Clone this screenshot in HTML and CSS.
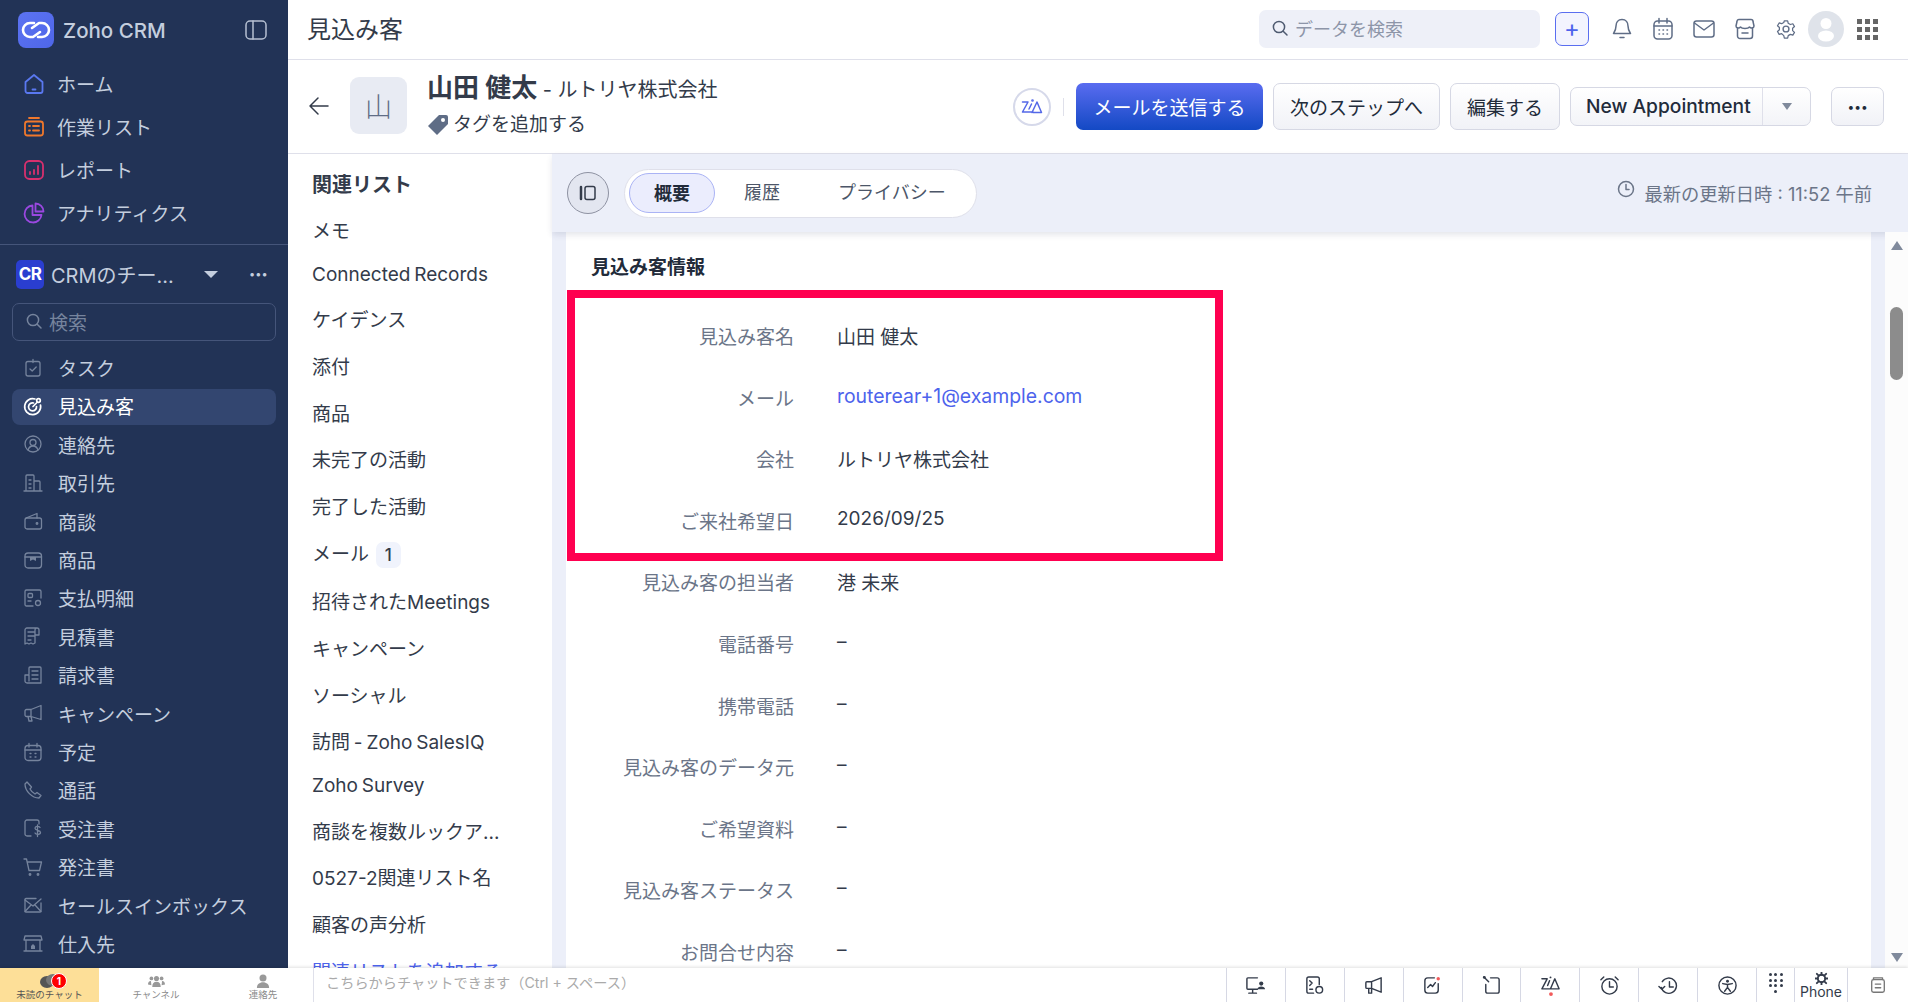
FILE: index.html
```html
<!DOCTYPE html>
<html lang="ja">
<head>
  <meta charset="UTF-8" />
  <title>Zoho CRM</title>
  <link rel="stylesheet" href="styles.css">
</head>
<body>
  <svg class="defs" width="0" height="0">
    <symbol id="i-search" viewBox="0 0 18 18"><circle cx="8" cy="8" r="5.6"/><path d="M12.2 12.2 16 16"/></symbol>
  </svg>
  <div class="app">
    <aside class="sidebar">
      <div class="brand">
        <div class="brand-logo">
          <svg viewBox="0 0 36 36" width="36" height="36"><g fill="none" stroke="#fff" stroke-width="2.6"><path d="M16 11h-4a7 7 0 0 0 0 14h3l7-5"/><path d="M20 25h4a7 7 0 0 0 0-14h-3l-7 5"/></g></svg>
        </div>
        <div class="brand-name">Zoho CRM</div>
        <svg class="brand-toggle" viewBox="0 0 22 20" width="22" height="20"><rect x="1" y="1" width="20" height="18" rx="4"/><path d="M8 1v18"/></svg>
      </div>
      <nav class="top-nav">
        <a class="top-item"><svg viewBox="0 0 22 22" class="c-blue"><path d="M2.5 9 11 2l8.500 7v9a2 2 0 0 1-2 2h-13a2 2 0 0 1-2-2z"/><path d="M9.500 16.500h3"/></svg>ホーム</a>
        <a class="top-item"><svg viewBox="0 0 22 22" class="c-orange"><path d="M6 2h10"/><rect x="2" y="5.500" width="18" height="14" rx="2.500"/><path d="M6 10h1M6 14.500h1M10 10h6M10 14.500h6"/></svg>作業リスト</a>
        <a class="top-item"><svg viewBox="0 0 22 22" class="c-pink"><rect x="2" y="2" width="18" height="18" rx="4.500"/><path d="M7 15v-2M11 15v-4M15 15V7"/></svg>レポート</a>
        <a class="top-item"><svg viewBox="0 0 22 22" class="c-purple"><path d="M9.500 3.500a8.500 8.500 0 1 0 9 9.500h-9z"/><path d="M12.500 1.500a8 8 0 0 1 8 8h-8z"/></svg>アナリティクス</a>
      </nav>
      <div class="team">
        <div class="team-row">
          <span class="team-badge">CR</span>
          <span class="team-name">CRMのチー...</span>
          <span class="caret"></span>
          <span class="team-more">•••</span>
        </div>
        <div class="side-search"><svg width="18" height="18"><use href="#i-search"/></svg>検索</div>
      </div>
      <nav class="mod-nav">
        <a class="mod-item"><svg viewBox="0 0 20 20"><rect x="3" y="3.500" width="14" height="14.500" rx="2"/><path d="M10 1.500v3M7 11l2.200 2 4-4"/></svg>タスク</a>
        <a class="mod-item active"><svg viewBox="0 0 20 20"><path d="M12 3a8 8 0 1 0 5.500 6"/><path d="M10.500 7a4 4 0 1 0 3 3.500"/><path d="M10 10.500l4-4"/><circle cx="15.500" cy="4.500" r="1.800"/></svg>見込み客</a>
        <a class="mod-item"><svg viewBox="0 0 20 20"><circle cx="10" cy="10" r="8"/><circle cx="10" cy="8.500" r="3"/><path d="M5 16c1-3 3-4 5-4s4 1 5 4"/></svg>連絡先</a>
        <a class="mod-item"><svg viewBox="0 0 20 20"><path d="M1 18h18M3 18V3a1 1 0 0 1 1-1h6a1 1 0 0 1 1 1v15M11 8h5a1 1 0 0 1 1 1v9M6 7h2M6 11h2M6 15h2"/></svg>取引先</a>
        <a class="mod-item"><svg viewBox="0 0 20 20"><rect x="2" y="7" width="16.500" height="11" rx="2"/><path d="M3 7l11-4.500V7"/><circle cx="14" cy="12.500" r=".8"/></svg>商談</a>
        <a class="mod-item"><svg viewBox="0 0 20 20"><rect x="2" y="3" width="16.500" height="15" rx="3"/><path d="M2 7h16.500"/><path class="fill" d="M7 7h6v4l-3-1.500L7 11z"/></svg>商品</a>
        <a class="mod-item"><svg viewBox="0 0 20 20"><path d="M10 18H3.500a1.500 1.500 0 0 1-1.500-1.500v-13A1.500 1.500 0 0 1 3.500 2h13A1.500 1.500 0 0 1 18 3.500V10"/><rect x="5" y="5.500" width="4.500" height="4" rx="1"/><path d="M5 13h3"/><circle cx="15" cy="15" r="2.500"/></svg>支払明細</a>
        <a class="mod-item"><svg viewBox="0 0 20 20"><path d="M14 2H4a2 2 0 0 0-2 2v14l2-1 2 1 2-1 2 1 2-1V4a2 2 0 0 1 2-2 2 2 0 0 1 2 2v5h-4M5 6h6M5 10h6M5 14h3"/></svg>見積書</a>
        <a class="mod-item"><svg viewBox="0 0 20 20"><path d="M6 9V3a1 1 0 0 1 1-1h10a1 1 0 0 1 1 1v15H4a2 2 0 0 1-2-2v-6h4v6M9 6h6M9 10h6M9 14h6"/></svg>請求書</a>
        <a class="mod-item"><svg viewBox="0 0 20 20"><path d="M18 2.500v14L8 13.500H3.500a1.500 1.500 0 0 1-1.500-1.500V8a1.500 1.500 0 0 1 1.500-1.500H8zM8 6.500v7M5 13.500 6 18h3l-1-4.500"/></svg>キャンペーン</a>
        <a class="mod-item"><svg viewBox="0 0 20 20"><rect x="2" y="3.500" width="16" height="15" rx="3"/><path d="M6 1.500v3.500M14 1.500v3.500M2 8h16M7 11.500h1M12 11.500h1M7 15h1M12 15h1"/></svg>予定</a>
        <a class="mod-item"><svg viewBox="0 0 20 20"><path d="M4 2 2 4c0 7 7 14 14 14l2-2.500-4-3-2 1.500c-2-1-4-3-5-5l1.500-2z"/></svg>通話</a>
        <a class="mod-item"><svg viewBox="0 0 20 20"><path d="M8 18H4a2 2 0 0 1-2-2V4a2 2 0 0 1 2-2h10a2 2 0 0 1 2 2v2"/><path d="M17 9.500c-1-1.500-5-1.500-5 .8 0 2.700 5.500 1.500 5.500 4.200 0 2.300-4.500 2.300-5.500.5M14.500 7v11.500"/></svg>受注書</a>
        <a class="mod-item"><svg viewBox="0 0 20 20"><path d="M1 2h2.500L6 13.500h10.500L18.500 5H4"/><circle cx="7" cy="17.500" r=".8"/><circle cx="15" cy="17.500" r=".8"/></svg>発注書</a>
        <a class="mod-item"><svg viewBox="0 0 20 20"><path d="M13 3.500H3a1 1 0 0 0-1 1V16a1 1 0 0 0 1 1h14a1 1 0 0 0 1-1V8"/><path d="m2 5 8 6 8-7M2 16.500 8 10M18 16.500 12 10"/></svg>セールスインボックス</a>
        <a class="mod-item"><svg viewBox="0 0 20 20"><path d="M2 3h16l1 4H1zM3 7v11h14V7M1 18h18"/><path class="fill" d="M8 16v-3l2-2 2 2v3z"/></svg>仕入先</a>
      </nav>
    </aside>

    <main class="main">
      <header class="topbar">
        <div class="page-title">見込み客</div>
        <div class="global-search"><svg width="18" height="18"><use href="#i-search"/></svg>データを検索</div>
        <button class="plus-btn">+</button>
        <svg class="top-ic" viewBox="0 0 22 24"><path d="M11 2.500c-4 0-6 3-6 6.500 0 4-1.500 6-2.500 7.500h17C18.500 15 17 13 17 9c0-3.500-2-6.500-6-6.500zM9 20.500h4"/></svg>
        <svg class="top-ic" viewBox="0 0 22 24"><rect x="2" y="4" width="18" height="18" rx="3.500"/><path d="M7 1.500V6M15 1.500V6M2 9h18M7 13h.5M11 13h.5M15 13h.5M7 17h.5M11 17h.5M15 17h.5"/></svg>
        <svg class="top-ic" viewBox="0 0 22 24"><rect x="1" y="4" width="20" height="16" rx="2.500"/><path d="m1.500 6 9.500 7 9.500-7"/></svg>
        <svg class="top-ic" viewBox="0 0 22 24"><path d="M5 2.500h12a2 2 0 0 1 2 2l1 4.500c0 2-3 3-4.500 1-1.500 2-7.500 2-9 0-1.500 2-4.500 1-4.500-1l1-4.500a2 2 0 0 1 2-2z"/><path d="M3.500 11v8a2.500 2.500 0 0 0 2.500 2.500h10a2.500 2.500 0 0 0 2.500-2.500v-8M8 16h6"/></svg>
        <svg class="top-ic" viewBox="0 0 24 24"><path d="M10 2.500h4l.7 3 2.600 1.500 3-.9 2 3.400-2.300 2.100v2.800l2.300 2.100-2 3.400-3-.9-2.600 1.500-.7 3h-4l-.7-3L6.700 18l-3 .9-2-3.400L4 13.400v-2.800L1.700 8.500l2-3.400 3 .9L9.300 4.500z" transform="translate(1.200 .8) scale(.9)"/><circle cx="12" cy="12" r="3.200"/></svg>
        <div class="avatar"><svg viewBox="0 0 36 36" width="36" height="36"><circle cx="18" cy="18" r="18" fill="#dfe3ea"/><circle cx="18" cy="12.500" r="5.500" fill="#fff"/><ellipse cx="18" cy="25" rx="8" ry="5.500" fill="#fff"/></svg></div>
        <div class="apps-grid"><i></i><i></i><i></i><i></i><i></i><i></i><i></i><i></i><i></i></div>
      </header>

      <section class="record-head">
        <svg class="back" viewBox="0 0 22 20" width="22" height="20"><path d="M20 10H2M10 2l-8 8 8 8"/></svg>
        <div class="record-avatar">山</div>
        <div class="record-info">
          <div class="record-name"><strong>山田 健太</strong> - ルトリヤ株式会社</div>
          <div class="record-tag">
            <svg class="tag-ic" viewBox="0 0 22 22" width="22" height="22"><path d="M12 1h7a2 2 0 0 1 2 2v7L10 21 1 12z" fill="#5f6d86"/><circle cx="16" cy="6" r="2" fill="#fff"/></svg>
            タグを追加する
          </div>
        </div>
        <div class="record-actions">
          <div class="zia-circle"><svg viewBox="0 0 24 20" width="24" height="20"><path d="M2.500 5H8L2.500 15H13M13 15.500h8.500L17 5l-5 10.500M11.500 7 9 12"/><circle cx="12.500" cy="3.500" r=".6"/></svg></div>
          <span class="action-sep"></span>
          <button class="btn btn-primary">メールを送信する</button>
          <button class="btn">次のステップへ</button>
          <button class="btn">編集する</button>
          <div class="split-btn"><span class="split-label">New Appointment</span><span class="split-caret"></span></div>
          <button class="btn btn-more">•••</button>
        </div>
      </section>

      <div class="record-body">
        <aside class="related">
          <h3 class="related-title">関連リスト</h3>
          <ul class="related-list">
            <li>メモ</li>
            <li>Connected Records</li>
            <li>ケイデンス</li>
            <li>添付</li>
            <li>商品</li>
            <li>未完了の活動</li>
            <li>完了した活動</li>
            <li>メール <span class="count">1</span></li>
            <li>招待されたMeetings</li>
            <li>キャンペーン</li>
            <li>ソーシャル</li>
            <li>訪問 - Zoho SalesIQ</li>
            <li>Zoho Survey</li>
            <li>商談を複数ルックア...</li>
            <li>0527-2関連リスト名</li>
            <li>顧客の声分析</li>
            <li class="add-link">関連リストを追加する</li>
          </ul>
        </aside>

        <div class="detail">
          <div class="tab-bar">
            <button class="panel-toggle"><svg viewBox="0 0 18 16" width="18" height="16"><path d="M2 2v12" stroke-width="2.500"/><rect x="6" y="1.500" width="10" height="13" rx="2"/></svg></button>
            <div class="tabs">
              <span class="tab active">概要</span>
              <span class="tab">履歴</span>
              <span class="tab">プライバシー</span>
            </div>
            <div class="updated"><svg viewBox="0 0 18 18" width="18" height="18"><circle cx="9" cy="9" r="7.500"/><path d="M9 4.500V9.500H12"/></svg>最新の更新日時 : 11:52 午前</div>
          </div>
          <div class="detail-scroll">
            <div class="detail-content">
              <h3 class="section-title">見込み客情報</h3>
              <div class="fields">
                <div class="highlight"></div>
                <div class="field"><span class="f-label">見込み客名</span><span class="f-value">山田 健太</span></div>
                <div class="field"><span class="f-label">メール</span><span class="f-value f-link">routerear+1@example.com</span></div>
                <div class="field"><span class="f-label">会社</span><span class="f-value">ルトリヤ株式会社</span></div>
                <div class="field"><span class="f-label">ご来社希望日</span><span class="f-value">2026/09/25</span></div>
                <div class="field"><span class="f-label">見込み客の担当者</span><span class="f-value">港 未来</span></div>
                <div class="field"><span class="f-label">電話番号</span><span class="f-value">–</span></div>
                <div class="field"><span class="f-label">携帯電話</span><span class="f-value">–</span></div>
                <div class="field"><span class="f-label">見込み客のデータ元</span><span class="f-value">–</span></div>
                <div class="field"><span class="f-label">ご希望資料</span><span class="f-value">–</span></div>
                <div class="field"><span class="f-label">見込み客ステータス</span><span class="f-value">–</span></div>
                <div class="field"><span class="f-label">お問合せ内容</span><span class="f-value">–</span></div>
              </div>
            </div>
            <div class="scrollbar">
              <span class="sb-up"></span>
              <span class="sb-thumb"></span>
              <span class="sb-down"></span>
            </div>
          </div>
        </div>
      </div>
    </main>
  </div>

  <footer class="chatbar">
    <div class="chat-tab unread">
      <svg viewBox="0 0 20 16" width="20" height="16"><ellipse cx="7" cy="9" rx="7" ry="6" fill="#555"/><ellipse cx="13" cy="7" rx="7" ry="6" fill="#777"/></svg>
      <span class="chat-badge">1</span>
      <span class="chat-label">未読のチャット</span>
    </div>
    <div class="chat-tab channel">
      <svg class="people" viewBox="0 0 20 16" width="17" height="14"><circle cx="10" cy="5" r="3"/><circle cx="4" cy="5" r="2.200"/><circle cx="16" cy="5" r="2.200"/><path d="M5 15c0-4 2-6 5-6s5 2 5 6zM0 12c0-2 1-4 3.500-4L4 13zM20 12c0-2-1-4-3.500-4L16 13z"/></svg>
      <span class="chat-label">チャンネル</span>
    </div>
    <div class="chat-tab contact">
      <svg class="people" viewBox="0 0 16 16" width="14" height="14"><circle cx="8" cy="4.500" r="4"/><path d="M1 16c0-4 3-6.500 7-6.500s7 2.500 7 6.500z"/></svg>
      <span class="chat-label">連絡先</span>
    </div>
    <div class="chat-input">こちらからチャットできます（Ctrl + スペース）</div>
    <div class="tool-cell"><svg viewBox="0 0 22 22"><path d="M13 3H3a1 1 0 0 0-1 1v10a1 1 0 0 0 1 1h10M8 15v4M4 19h8"/><circle class="solid" cx="17" cy="9" r="2.200"/><path class="solid" d="M13 15c0-2 2-3 4-3s4 1 4 3z"/></svg></div>
    <div class="tool-cell"><svg viewBox="0 0 22 22"><path d="M10 19H5a2 2 0 0 1-2-2V4a2 2 0 0 1 2-2h9a2 2 0 0 1 2 2v6M6 6l2.500 2.500L6 11M6 15h3"/><circle cx="16" cy="15.500" r="3.500"/></svg></div>
    <div class="tool-cell"><svg viewBox="0 0 22 22"><path d="M19 3v15L9 14H4a1 1 0 0 1-1-1V8a1 1 0 0 1 1-1h5zM9 7v7M6 14v5h3v-5"/></svg></div>
    <div class="tool-cell"><svg viewBox="0 0 22 22"><path d="M13 3H6a3 3 0 0 0-3 3v10a3 3 0 0 0 3 3h8a3 3 0 0 0 3-3V9M6 13l3-3 2 2 3-4"/><circle class="red" cx="17" cy="4" r="1.800"/></svg></div>
    <div class="tool-cell"><svg viewBox="0 0 22 22"><path d="M10 3h7a2 2 0 0 1 2 2v12a2 2 0 0 1-2 2H7a2 2 0 0 1-2-2v-7M3 2l5 5"/><circle class="solid" cx="3.500" cy="2.500" r="1.500"/></svg></div>
    <div class="tool-cell"><svg viewBox="0 0 22 22"><path d="M2 4h5.500L2 14.500h9.500M11 14.500h9L15.500 4l-4.500 10.500M10 6 8 11"/><circle class="solid" cx="11" cy="2.500" r="1"/><circle class="red" cx="11.500" cy="20" r="2"/></svg></div>
    <div class="tool-cell"><svg viewBox="0 0 22 22"><circle cx="11" cy="12" r="8"/><path d="M11 7v5.500h4M2 5l3-3M20 5l-3-3"/></svg></div>
    <div class="tool-cell"><svg viewBox="0 0 22 22"><path d="M4.500 7a8 8 0 1 1-1 6M1 12l3 3 3-3M12 7v5.500h4"/></svg></div>
    <div class="tool-cell"><svg viewBox="0 0 22 22"><circle cx="11" cy="11" r="9"/><circle class="solid" cx="11" cy="6.500" r="1.500"/><path d="M6 9l5 1 5-1M11 10v3M8 17l3-4 3 4"/></svg></div>
    <div class="tool-cell narrow"><div class="dial"><i></i><i></i><i></i><i></i><i></i><i></i><i></i><i></i><i></i><i class="last"></i></div></div>
    <div class="tool-cell phone">
      <svg viewBox="0 0 14 14" width="14" height="14"><circle cx="7" cy="7" r="4"/><path d="M7 0v3M7 11v3M0 7h3M11 7h3M2 2l2 2M10 10l2 2M12 2l-2 2M4 10l-2 2"/></svg>
      <span>Phone</span>
    </div>
    <div class="tool-end"><svg viewBox="0 0 20 20" width="18" height="18"><rect x="3" y="4" width="14" height="14" rx="2"/><path d="M5 4V2h10v2M7 9h6M7 13h6"/></svg></div>
  </footer>
</body>
</html>
```
FILE: styles.css
```css
* { margin: 0; padding: 0; box-sizing: border-box; }
html, body { height: 100%; overflow: hidden; }
body { font-family: Inter, "Noto Sans CJK JP", sans-serif; color: #222b3a; background: #fff; font-size: 19px; }
.defs { position: absolute; }
svg { fill: none; stroke: currentColor; stroke-width: 1.5; stroke-linecap: round; stroke-linejoin: round; flex: none; }
ul { list-style: none; }
button { font-family: inherit; }
.app { display: flex; height: 968px; }

/* sidebar */
.sidebar { width: 288px; flex: none; background: #223356; color: #c4cede; overflow: hidden; }
.brand { display: flex; align-items: center; height: 60px; padding: 0 21px 0 18px; }
.brand-logo { width: 36px; height: 36px; border-radius: 8px; background: linear-gradient(135deg, #5c73f2, #4e66e8); }
.brand-name { font-size: 20.500px; font-weight: 500; margin-left: 9px; flex: 1; color: #c4cede; padding-top: 1px; }
.brand-toggle { color: #b6c0d2; }
.top-nav { padding: 2px 0 10px; border-bottom: 1px solid #45557a; height: 185px; }
.top-item { display: flex; align-items: center; height: 43px; padding-left: 23px; gap: 12px; font-size: 19px; }
.top-item svg { width: 22px; height: 22px; stroke-width: 1.8; }
.c-blue { color: #5a78f0; }
.c-orange { color: #f0782c; }
.c-pink { color: #d8306e; }
.c-purple { color: #9a48e0; }
.team { padding: 0 12px; }
.team-row { display: flex; align-items: center; height: 58px; padding: 0 4px; }
.team-badge { width: 28px; height: 29px; border-radius: 5px; background: #2a3ed0; color: #fff; font-weight: 700; font-size: 17px; letter-spacing: -.5px; display: flex; align-items: center; justify-content: center; }
.team-name { font-size: 20px; margin-left: 7px; width: 153px; white-space: nowrap; }
.caret { width: 0; height: 0; border: 7px solid transparent; border-top: 7px solid #c4cede; border-bottom: 0; }
.team-more { margin-left: 31px; font-size: 11px; color: #c4cede; }
.side-search { display: flex; align-items: center; gap: 6px; height: 38px; border: 1px solid #45557a; border-radius: 7px; padding: 0 12px 2px; color: #76849d; font-size: 19px; }
.side-search svg { color: #76849d; }
.mod-nav { padding: 9.600px 12px 0; }
.mod-item { display: flex; align-items: center; height: 36px; margin-bottom: 2.400px; padding: 0 0 2px 11px; gap: 15px; font-size: 19px; border-radius: 8px; }
.mod-item svg { width: 20px; height: 20px; color: #76849d; stroke-width: 1.3; }
.mod-item svg .fill { fill: currentColor; stroke: none; }
.mod-item.active { background: #334670; color: #fff; }
.mod-item.active svg { color: #fff; stroke-width: 1.7; }

/* top bar */
.main { flex: 1; min-width: 0; display: flex; flex-direction: column; }
.topbar { display: flex; align-items: center; height: 60px; border-bottom: 1px solid #dfe0ea; padding: 0 30px 1px 19px; flex: none; color: #5f6d86; }
.page-title { font-size: 24px; color: #333b4a; margin-right: auto; padding-bottom: 3px; }
.global-search { display: flex; align-items: center; gap: 6px; width: 281px; height: 38px; background: #eef0f8; border-radius: 7px; padding: 0 12px 2px; color: #8d95a8; font-size: 18px; margin-right: 15px; }
.global-search svg { color: #4e5a70; }
.plus-btn { width: 34px; height: 34px; border: 1px solid #5a6ef0; border-radius: 7px; background: #f3f4fe; color: #4d63ec; font-size: 24px; line-height: 1; margin-right: 22px; }
.top-ic { width: 22px; height: 24px; margin-right: 19px; color: #5f6d86; }
.avatar { width: 36px; height: 36px; margin-left: -8px; margin-right: 13px; }
.avatar svg { stroke: none; }
.apps-grid { display: grid; grid-template-columns: repeat(3, 5px); gap: 3px; }
.apps-grid i { width: 5px; height: 5px; background: #666; }

/* record header */
.record-head { display: flex; align-items: center; height: 94px; border-bottom: 1px solid #dfe0ea; padding: 0 24px 2px 20px; flex: none; }
.back { color: #333b4a; }
.record-avatar { width: 57px; height: 57px; border-radius: 9px; background: #e8ebf3; color: #5f6d86; font-size: 27px; font-weight: 300; display: flex; align-items: center; justify-content: center; margin-left: 20px; }
.record-info { margin-left: 20px; }
.record-name { font-size: 20px; color: #333b4a; line-height: 32px; }
.record-name strong { font-size: 26px; font-weight: 700; }
.record-tag { display: flex; align-items: center; gap: 4px; font-size: 19px; color: #333b4a; line-height: 28px; margin-top: 5px; }
.tag-ic { stroke: none; }
.record-actions { display: flex; align-items: center; margin-left: auto; margin-top: 2px; }
.zia-circle { width: 38px; height: 38px; border-radius: 50%; border: 2px solid #d6d9ea; display: flex; align-items: center; justify-content: center; color: #5468e8; margin-right: 12px; }
.action-sep { width: 1px; height: 18px; background: #dfe0ea; margin-right: 12px; }
.btn { height: 47px; padding: 0 16px; border: 1px solid #d6d8e4; border-radius: 7px; background: linear-gradient(#fff, #f1f2f7); font-size: 19px; color: #222b3a; margin-right: 10px; }
.btn-primary { background: linear-gradient(#5a6cf0, #1349c4); border: 0; color: #fff; width: 187px; padding: 0; }
.split-btn { display: flex; align-items: center; height: 39px; width: 241px; border: 1px solid #d6d8e4; border-radius: 7px; background: linear-gradient(#fff, #f3f4f8); margin-right: 20px; }
.split-label { font-size: 19.200px; font-weight: 500; padding-left: 15px; width: 192px; line-height: 37px; border-right: 1px solid #dfe0ea; white-space: nowrap; }
.split-caret { width: 0; height: 0; margin: 0 auto; border: 5px solid transparent; border-top: 7px solid #808a9c; border-bottom: 0; }
.btn-more { height: 39px; width: 53px; padding: 0; font-size: 12px; margin-right: 0; }

/* related list */
.record-body { flex: 1; display: flex; min-height: 0; }
.related { width: 264px; flex: none; padding: 17px 0 0 24px; overflow: hidden; }
.related-title { font-size: 20px; font-weight: 700; color: #333b4a; line-height: 28px; margin-bottom: 7px; }
.related-list li { padding: 9.850px 0; font-size: 19px; word-spacing: -1.500px; color: #333b4a; white-space: nowrap; }
.count { display: inline-block; background: #f0f3fc; border-radius: 7px; padding: 0 9px; line-height: 26px; font-size: 17px; font-weight: 500; margin-left: 3px; }
.related-list .add-link { color: #4d63ec; }

/* detail */
.detail { flex: 1; min-width: 0; display: flex; flex-direction: column; background: #eceff9; }
.tab-bar { display: flex; align-items: center; height: 78px; padding: 0 36px 0 15px; flex: none; box-shadow: 0 3px 6px rgba(40, 50, 90, .12); position: relative; }
.panel-toggle { width: 42px; height: 42px; border-radius: 50%; border: 1px solid #8e92a2; background: #e3e6f0; display: flex; align-items: center; justify-content: center; color: #333b4a; margin-right: 15px; }
.tabs { display: flex; align-items: center; height: 49px; background: #fff; border: 1px solid #dfe0ea; border-radius: 25px; padding: 0 1px 0 4px; }
.tab { font-size: 18px; color: #4c5668; height: 40px; line-height: 40px; padding: 0 29px; border-radius: 20px; }
.tab.active { background: #ebedfd; border: 1px solid #aab3f5; font-weight: 700; color: #222b3a; padding: 0 24px; line-height: 39px; }
.updated { display: flex; align-items: center; gap: 9px; margin-left: auto; color: #6b7588; font-size: 18.300px; }
.updated svg { margin-top: -8px; }
.detail-scroll { flex: 1; display: flex; min-height: 0; padding-left: 14px; }
.detail-content { flex: 1; background: #fff; padding: 22px 0 0 25px; overflow: hidden; }
.section-title { font-size: 19px; font-weight: 700; color: #222b3a; line-height: 28px; }
.fields { position: relative; margin-top: 8px; padding-top: 32px; }
.highlight { position: absolute; left: -24px; top: 0; width: 656px; height: 271px; border: 8px solid #ff0050; }
.field { display: flex; height: 61.600px; align-items: flex-start; font-size: 19px; }
.f-label { width: 203px; text-align: right; color: #6b7588; white-space: nowrap; }
.f-value { margin-left: 43px; color: #333b4a; }
.f-link { color: #4d63ec; font-size: 19.400px; }
.scrollbar { width: 23px; flex: none; margin-left: 14px; background: #fcfcfc; position: relative; }
.sb-up, .sb-down { width: 0; height: 0; border: 6px solid transparent; position: absolute; right: 5px; }
.sb-up { top: 9px; border-bottom: 9px solid #808a9c; border-top: 0; }
.sb-down { bottom: 6px; border-top: 9px solid #808a9c; border-bottom: 0; }
.sb-thumb { position: absolute; right: 5px; top: 75px; width: 13px; height: 73px; border-radius: 7px; background: #8c8c8c; }

/* bottom chat bar */
.chatbar { display: flex; align-items: stretch; height: 34px; background: #fff; box-shadow: 0 -1px 3px rgba(0, 0, 0, .12); position: relative; }
.chat-tab { display: flex; flex-direction: column; align-items: center; justify-content: flex-end; position: relative; padding-bottom: 1px; }
.chat-tab.unread { width: 99px; background: #fddf98; }
.chat-tab.channel { width: 114px; }
.chat-tab.contact { width: 100px; }
.chat-tab svg { stroke: none; }
.chat-tab svg.people { fill: #999; margin-bottom: 1px; }
.chat-label { font-size: 9.500px; line-height: 12px; color: #8a8a8a; }
.unread .chat-label { color: #555; }
.chat-badge { position: absolute; left: 51px; top: 5px; width: 16px; height: 16px; border-radius: 50%; background: #f00; border: 1px solid #fff; color: #fff; font-size: 10px; font-weight: 700; text-align: center; line-height: 14px; }
.chat-input { flex: 1; border-left: 1px solid #dfe0ea; font-size: 14.200px; color: #aaa; padding: 0 12px; line-height: 30px; white-space: nowrap; }
.tool-cell { width: 58.900px; flex: none; border-left: 1px solid #d6d8e4; display: flex; align-items: center; justify-content: center; color: #333b4a; }
.tool-cell svg { width: 21px; height: 21px; }
.tool-cell .solid { fill: currentColor; stroke: none; }
.tool-cell .red { fill: #f25a5a; stroke: none; }
.tool-cell.narrow { width: 38px; }
.tool-cell.phone { flex-direction: column; width: 54px; font-size: 14px; line-height: 14px; border-right: 1px solid #d6d8e4; }
.tool-cell.phone svg { width: 13px; height: 13px; stroke-width: 2; }
.dial { display: grid; grid-template-columns: repeat(3, 3px); gap: 2.500px; margin-top: -4px; }
.dial i { width: 3px; height: 3px; border-radius: 50%; background: #333b4a; }
.dial .last { grid-column: 2; }
.tool-end { width: 60px; flex: none; display: flex; align-items: center; justify-content: center; color: #777; }
```
